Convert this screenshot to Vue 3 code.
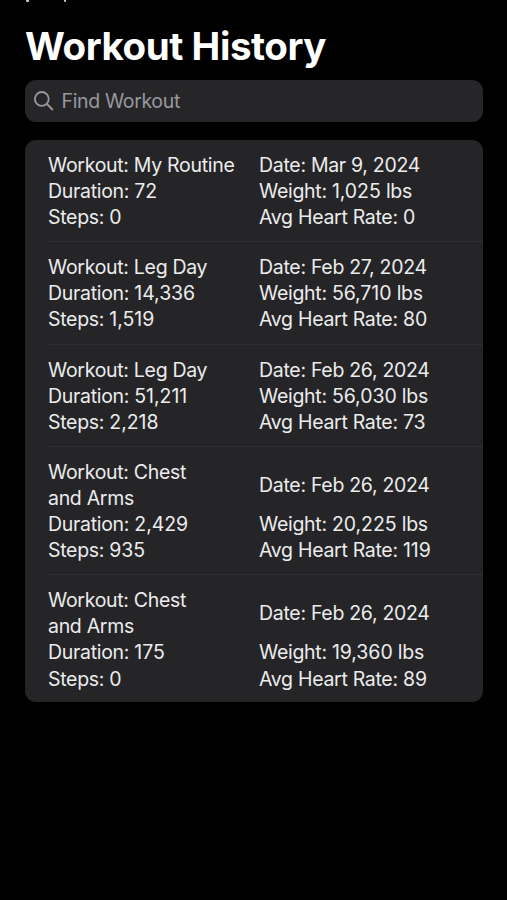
<template>
  <main class="history">
    <div class="history__overflow">
      <i />
      <i />
    </div>

    <h1 class="history__title">Workout History</h1>

    <label class="search">
      <svg
        class="search__icon"
        viewBox="0 0 20 20"
        fill="none"
        stroke="currentColor"
        stroke-width="1.8"
        stroke-linecap="round"
      >
        <circle
          cx="7.8"
          cy="7.9"
          r="6.9"
        />
        <path d="M12.9 13 18.4 18.5" />
      </svg>
      <input
        v-model="query"
        class="search__input"
        type="text"
        placeholder="Find Workout"
      >
    </label>

    <ul class="list">
      <li
        v-for="item in filtered"
        :key="item.id"
        class="list__item"
      >
        <span class="list__name">Workout: {{ item.name }}</span>
        <span>Date: {{ item.date }}</span>
        <span>Duration: <span class="list__value">{{ format(item.duration) }}</span></span>
        <span>Weight: <span class="list__value">{{ format(item.weight) }}</span> lbs</span>
        <span>Steps: <span class="list__value">{{ format(item.steps) }}</span></span>
        <span>Avg Heart Rate: <span class="list__value">{{ item.heartRate }}</span></span>
      </li>
    </ul>
  </main>
</template>

<script setup>
import { computed, ref } from 'vue';

const query = ref('');

const workouts = [
  { id: 1, name: 'My Routine', date: 'Mar 9, 2024', duration: 72, weight: 1025, steps: 0, heartRate: 0 },
  { id: 2, name: 'Leg Day', date: 'Feb 27, 2024', duration: 14336, weight: 56710, steps: 1519, heartRate: 80 },
  { id: 3, name: 'Leg Day', date: 'Feb 26, 2024', duration: 51211, weight: 56030, steps: 2218, heartRate: 73 },
  { id: 4, name: 'Chest and Arms', date: 'Feb 26, 2024', duration: 2429, weight: 20225, steps: 935, heartRate: 119 },
  { id: 5, name: 'Chest and Arms', date: 'Feb 26, 2024', duration: 175, weight: 19360, steps: 0, heartRate: 89 },
];

const filtered = computed(() => {
  const text = query.value.trim().toLowerCase();
  return workouts.filter((item) => item.name.toLowerCase().includes(text));
});

const format = (value) => value.toLocaleString('en-US');
</script>

<style>
body {
  background: #000;
}
</style>

<style scoped>
.history {
  box-sizing: border-box;
  height: 900px;
  padding: 0 24px 0 25px;
  overflow: hidden;
  background: #000;
  color: #ececed;
  font-family: Inter, "Liberation Sans", sans-serif;
}

/* tail of the row scrolled under the top edge */
.history__overflow {
  display: flex;
  gap: 35px;
  height: 24px;
  padding-left: 1px;
}

.history__overflow i {
  width: 3px;
  height: 2px;
  border-radius: 0 0 1px 1px;
  background: #c8c8c8;
}

.history__overflow i + i {
  width: 2px;
}

.history__title {
  margin: 0 0 12px;
  color: #fff;
  font-size: 38.5px;
  font-weight: 700;
  line-height: 44px;
  letter-spacing: -0.45px;
  white-space: nowrap;
}

.search {
  display: flex;
  align-items: center;
  box-sizing: border-box;
  height: 42px;
  padding: 0 9px;
  border-radius: 11px;
  background: #262629;
  color: #98989e;
}

.search__icon {
  flex: none;
  width: 20px;
  height: 20px;
  margin-right: 7.5px;
}

.search__input {
  flex: 1;
  min-width: 0;
  padding: 0;
  border: 0;
  outline: none;
  background: transparent;
  color: #ececed;
  font: inherit;
  font-size: 19.5px;
  letter-spacing: -0.35px;
}

.search__input::placeholder {
  color: #98989e;
  opacity: 1;
}

.list {
  margin: 18px 0 0;
  padding: 0;
  border-radius: 11px;
  background: #252527;
  list-style: none;
}

.list__item {
  position: relative;
  display: grid;
  grid-template-columns: 211px 1fr;
  align-items: center;
  padding: 12px 0 12px 23px;
  font-size: 19.5px;
  line-height: 26.1px;
  letter-spacing: -0.3px;
}

.list__item:last-child {
  padding-bottom: 10.8px;
}

.list__item:not(:last-child)::after {
  position: absolute;
  right: 0;
  bottom: 0;
  left: 23px;
  height: 1px;
  background: #303032;
  content: "";
}

.list__name {
  max-width: 190px;
  text-wrap: balance;
}

.list__value {
  letter-spacing: -0.05px;
}
</style>
